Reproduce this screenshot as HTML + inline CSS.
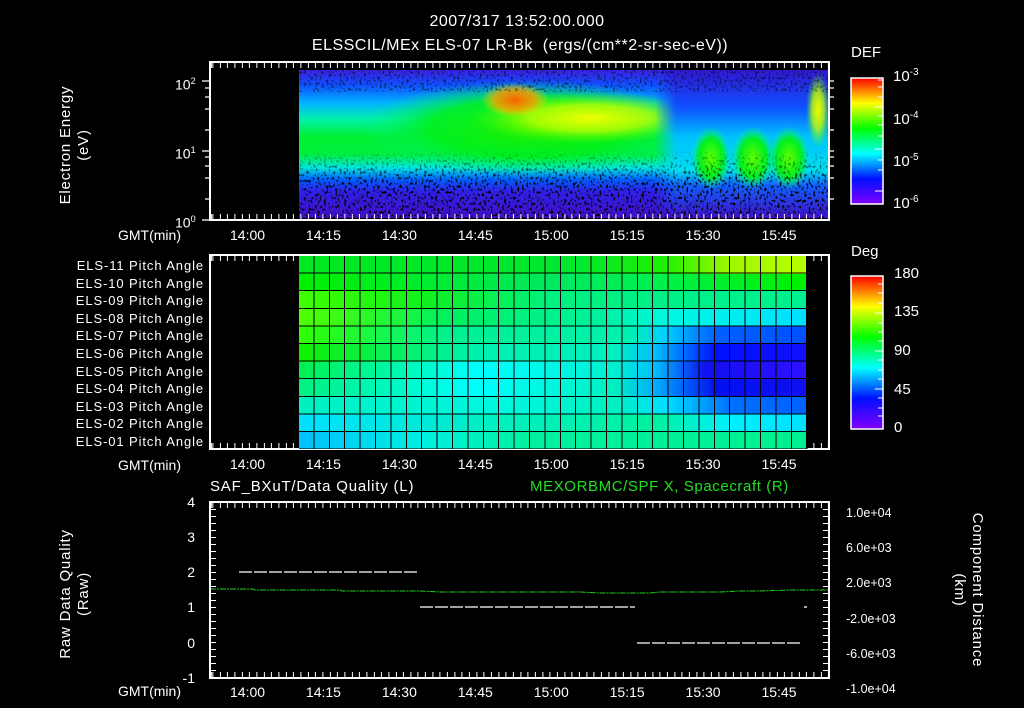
<!DOCTYPE html>
<html><head><meta charset="utf-8"><style>
body{margin:0;background:#000;width:1024px;height:708px;overflow:hidden;position:relative;font-family:"Liberation Sans",sans-serif;color:#fff}
.a{position:absolute;white-space:nowrap}
.t{font-size:14px;line-height:14px}
.box{position:absolute;border:2px solid #fff;box-sizing:border-box}
.row{position:absolute;left:299px;width:508px;height:17.6px}
</style></head><body>

<div class="a t" style="left:0;width:1034px;text-align:center;top:15px;font-size:16px;letter-spacing:0.5px">2007/317 13:52:00.000</div>
<div class="a t" style="left:0;width:1040px;text-align:center;top:39px;font-size:16px;letter-spacing:0.5px">ELSSCIL/MEx ELS-07 LR-Bk &nbsp;(ergs/(cm**2-sr-sec-eV))</div>

<svg class="a" style="left:0;top:0" width="1024" height="708" xmlns="http://www.w3.org/2000/svg">
<defs>
<linearGradient id="base" x1="0" y1="0" x2="0" y2="1">
<stop offset="0" stop-color="#3a20e0"/><stop offset="0.1" stop-color="#1050ff"/><stop offset="0.22" stop-color="#00b0ff"/><stop offset="0.33" stop-color="#00f0b0"/><stop offset="0.45" stop-color="#00f030"/><stop offset="0.57" stop-color="#00f040"/><stop offset="0.66" stop-color="#00e8e0"/><stop offset="0.74" stop-color="#0060ff"/><stop offset="0.82" stop-color="#3020e8"/><stop offset="1" stop-color="#4010c8"/>
</linearGradient>
<linearGradient id="right" x1="0" y1="0" x2="0" y2="1">
<stop offset="0" stop-color="#3018d0"/><stop offset="0.25" stop-color="#1050ff"/><stop offset="0.45" stop-color="#00c0ff"/><stop offset="0.68" stop-color="#00e0f0"/><stop offset="0.78" stop-color="#1060ff"/><stop offset="1" stop-color="#4010c8"/>
</linearGradient>
<linearGradient id="rfade" x1="0" y1="0" x2="1" y2="0"><stop offset="0" stop-color="#fff" stop-opacity="0"/><stop offset="0.12" stop-color="#fff"/><stop offset="1" stop-color="#fff"/></linearGradient>
<mask id="mr"><rect x="655" y="70" width="173" height="148" fill="url(#rfade)"/></mask>
<radialGradient id="yel"><stop offset="0" stop-color="#f0ff00"/><stop offset="0.5" stop-color="#c0ff00" stop-opacity="0.8"/><stop offset="1" stop-color="#40ff00" stop-opacity="0"/></radialGradient>
<radialGradient id="org"><stop offset="0" stop-color="#ff6000"/><stop offset="0.6" stop-color="#ffa000" stop-opacity="0.8"/><stop offset="1" stop-color="#ffe000" stop-opacity="0"/></radialGradient>
<radialGradient id="grn"><stop offset="0" stop-color="#60ff00"/><stop offset="0.6" stop-color="#00f020"/><stop offset="1" stop-color="#00f0a0" stop-opacity="0"/></radialGradient>
<radialGradient id="gbig"><stop offset="0" stop-color="#20f000"/><stop offset="0.6" stop-color="#00f020" stop-opacity="0.9"/><stop offset="1" stop-color="#00f080" stop-opacity="0"/></radialGradient>
<linearGradient id="cb" x1="0" y1="1" x2="0" y2="0">
<stop offset="0" stop-color="#8000ff"/><stop offset="0.2" stop-color="#0010ff"/><stop offset="0.4" stop-color="#00ffff"/><stop offset="0.6" stop-color="#00ff00"/><stop offset="0.8" stop-color="#ffff00"/><stop offset="1" stop-color="#ff0000"/>
</linearGradient>
<filter id="nz" x="0" y="0" width="100%" height="100%">
<feTurbulence type="fractalNoise" baseFrequency="0.45 0.35" numOctaves="1" seed="3"/>
<feColorMatrix type="matrix" values="0 0 0 0 0  0 0 0 0 0  0 0 0 0 0  6 0 0 0 -3.2"/>
</filter>
<linearGradient id="fade" x1="0" y1="0" x2="0" y2="1"><stop offset="0" stop-color="#fff" stop-opacity="0"/><stop offset="0.5" stop-color="#fff"/><stop offset="1" stop-color="#fff"/></linearGradient>
<mask id="m1"><rect x="299" y="150" width="529" height="68" fill="url(#fade)"/><rect x="299" y="70" width="529" height="22" fill="#fff" opacity="0.5"/></mask>
</defs>

<rect x="299" y="70" width="529" height="148" fill="url(#base)"/>
<ellipse cx="530" cy="128" rx="170" ry="48" fill="url(#gbig)"/>
<ellipse cx="590" cy="118" rx="120" ry="26" fill="url(#yel)"/>
<ellipse cx="515" cy="100" rx="34" ry="17" fill="url(#org)"/>
<rect x="655" y="70" width="173" height="148" fill="url(#right)" mask="url(#mr)"/>
<ellipse cx="711" cy="158" rx="20" ry="32" fill="url(#grn)"/>
<ellipse cx="753" cy="158" rx="22" ry="32" fill="url(#grn)"/>
<ellipse cx="789" cy="158" rx="21" ry="32" fill="url(#grn)"/>
<ellipse cx="818" cy="110" rx="12" ry="38" fill="url(#yel)"/>
<rect x="299" y="70" width="529" height="148" filter="url(#nz)" mask="url(#m1)"/>

<rect x="851" y="78" width="32" height="126" fill="url(#cb)" stroke="#fff" stroke-width="1.5"/>
<rect x="851" y="276" width="32" height="153" fill="url(#cb)" stroke="#fff" stroke-width="1.5"/>
<g stroke="#fff" stroke-width="1">
<path d="M883 80h-5M883 87h-5M883 97h-5M883 107h-8M883 116h-5M883 125h-5M883 136h-5M883 149h-8M883 160h-5M883 170h-5M883 191h-8"/>
<path d="M883 284h-5M883 293h-5M883 303h-5M883 313h-8M883 323h-5M883 332h-5M883 341h-5M883 351h-8M883 360h-5M883 370h-5M883 379h-5M883 389h-8M883 398h-5M883 408h-5M883 416h-5"/>
</g>

<g stroke="#fff" stroke-width="1.3">
<path d="M210 81h-8M210 88h-5M210 97h-5M210 109h-5M210 130h-5M210 151h-8M210 157h-5M210 166h-5M210 178h-5M210 199h-5M210 220h-8"/>
<path d="M829 81h5M829 88h5M829 97h5M829 109h5M829 130h5M829 151h5M829 157h5M829 166h5M829 178h5M829 199h5"/>
</g>

<g stroke="#fff" stroke-width="1.3" stroke-dasharray="13 2">
<path d="M239 572H418"/><path d="M420 607H635"/><path d="M637 643H802"/><path d="M804 607h3"/>
</g>
<path d="M210 589H252L255 590H340L342 591H420L440 592H580L600 593H650L660 592H720L740 591H760L790 590H829" stroke="#20d020" stroke-width="1" stroke-dasharray="6 1 2 1" fill="none"/>
</svg>

<div class="box" style="left:209px;top:61px;width:621px;height:160px"></div>
<div class="box" style="left:209px;top:254px;width:621px;height:196px"></div>
<div class="box" style="left:209px;top:501px;width:621px;height:178px"></div>

<div class="a" style="left:211px;top:63px;width:617px;height:5px;background:repeating-linear-gradient(90deg,#fff 0 1px,transparent 1px 7.33px);background-position:1.4px 0"></div>
<div class="a" style="left:211px;top:214px;width:617px;height:5px;background:repeating-linear-gradient(90deg,#fff 0 1px,transparent 1px 7.33px);background-position:1.4px 0"></div>
<div class="a" style="left:211px;top:256px;width:617px;height:5px;background:repeating-linear-gradient(90deg,#fff 0 1px,transparent 1px 7.33px);background-position:1.4px 0"></div>
<div class="a" style="left:211px;top:443px;width:617px;height:5px;background:repeating-linear-gradient(90deg,#fff 0 1px,transparent 1px 7.33px);background-position:1.4px 0"></div>
<div class="a" style="left:211px;top:503px;width:617px;height:5px;background:repeating-linear-gradient(90deg,#fff 0 1px,transparent 1px 7.33px);background-position:1.4px 0"></div>
<div class="a" style="left:211px;top:672px;width:617px;height:5px;background:repeating-linear-gradient(90deg,#fff 0 1px,transparent 1px 7.33px);background-position:1.4px 0"></div>
<div class="a" style="left:211px;top:503px;width:5px;height:174px;background:repeating-linear-gradient(180deg,transparent 0 6px,#fff 6px 7px);"></div>
<div class="a" style="left:823px;top:503px;width:5px;height:174px;background:repeating-linear-gradient(180deg,transparent 0 6px,#fff 6px 7px);"></div>

<div class="row" style="top:256px;background:linear-gradient(90deg,#00e820,#00e830 55%,#20f000 72%,#a0f800 85%,#b8ff00)"></div>
<div class="row" style="top:273.6px;background:linear-gradient(90deg,#00f000,#00e860 50%,#00f050 70%,#00f000)"></div>
<div class="row" style="top:291.2px;background:linear-gradient(90deg,#40ff00,#10f020 25%,#00f080 50%,#00f090)"></div>
<div class="row" style="top:308.8px;background:linear-gradient(90deg,#50ff00,#00f060 30%,#00f0a0 60%,#00f8e0 72%,#00e0ff)"></div>
<div class="row" style="top:326.4px;background:linear-gradient(90deg,#30ff00,#00f090 30%,#00f0b0 65%,#00d0ff 72%,#0060ff 82%,#0050ff)"></div>
<div class="row" style="top:344px;background:linear-gradient(90deg,#10f000,#00f0b0 35%,#00f0c0 62%,#00c0ff 70%,#0010ff 82%,#1010ff)"></div>
<div class="row" style="top:361.6px;background:linear-gradient(90deg,#00f050,#00ffff 35%,#00f0d0 62%,#00c0ff 70%,#1010f0 80%,#3010ff)"></div>
<div class="row" style="top:379.2px;background:linear-gradient(90deg,#00f080,#00ffff 35%,#00f0c0 62%,#00b0ff 70%,#0010f0 82%,#1010f0)"></div>
<div class="row" style="top:396.8px;background:linear-gradient(90deg,#00f0c0,#00f8e0 40%,#00f0c0 62%,#00e0ff 72%,#0070ff 85%,#0060ff)"></div>
<div class="row" style="top:414.4px;background:linear-gradient(90deg,#00e0ff,#00f0c0 40%,#00f0a0 70%,#00f0ff 85%,#00e0ff)"></div>
<div class="row" style="top:432px;height:17px;background:linear-gradient(90deg,#00c0ff,#00f0e0 25%,#00f0a0 45%,#00f090)"></div>
<div class="a" style="left:299px;top:256px;width:509px;height:193px;background:repeating-linear-gradient(90deg,transparent 0 14.4px,#000 14.4px 15.4px),repeating-linear-gradient(180deg,transparent 0 16.6px,#000 16.6px 17.6px)"></div>

<div class="a t" style="left:0;top:145px;width:0;height:0"><div style="transform:rotate(-90deg);transform-origin:0 0;position:absolute;left:57px;top:66px;width:132px;text-align:center;line-height:18px;font-size:15px;letter-spacing:0.8px">Electron Energy<br>(eV)</div></div>
<div class="a t" style="left:175px;top:74px">10<sup style="font-size:9px">2</sup></div>
<div class="a t" style="left:175px;top:143px">10<sup style="font-size:9px">1</sup></div>
<div class="a t" style="left:175px;top:212px">10<sup style="font-size:9px">0</sup></div>

<div class="a t" style="left:118px;top:228px">GMT(min)</div>
<div class="a t" style="left:118px;top:458px">GMT(min)</div>
<div class="a t" style="left:118px;top:684px">GMT(min)</div>

<div class="a t" style="left:230px;top:228px;word-spacing:37px">14:00 14:15 14:30 14:45 15:00 15:15 15:30 15:45</div>
<div class="a t" style="left:230px;top:457px;word-spacing:37px">14:00 14:15 14:30 14:45 15:00 15:15 15:30 15:45</div>
<div class="a t" style="left:230px;top:685px;word-spacing:37px">14:00 14:15 14:30 14:45 15:00 15:15 15:30 15:45</div>

<div class="a t" style="left:851px;top:46px;font-size:15px">DEF</div>
<div class="a t" style="left:893px;top:66px;font-size:15px">10<sup style="font-size:10px">-3</sup></div>
<div class="a t" style="left:893px;top:109px;font-size:15px">10<sup style="font-size:10px">-4</sup></div>
<div class="a t" style="left:893px;top:151px;font-size:15px">10<sup style="font-size:10px">-5</sup></div>
<div class="a t" style="left:893px;top:193px;font-size:15px">10<sup style="font-size:10px">-6</sup></div>
<div class="a t" style="left:851px;top:245px;font-size:15px">Deg</div>
<div class="a t" style="left:894px;top:267px;font-size:15px">180</div>
<div class="a t" style="left:894px;top:305px;font-size:15px">135</div>
<div class="a t" style="left:894px;top:344px;font-size:15px">90</div>
<div class="a t" style="left:894px;top:383px;font-size:15px">45</div>
<div class="a t" style="left:894px;top:421px;font-size:15px">0</div>

<div class="a" style="left:40px;top:257px;width:164px;text-align:right;font-size:13px;letter-spacing:0.9px;line-height:17.6px">ELS-11 Pitch Angle<br>ELS-10 Pitch Angle<br>ELS-09 Pitch Angle<br>ELS-08 Pitch Angle<br>ELS-07 Pitch Angle<br>ELS-06 Pitch Angle<br>ELS-05 Pitch Angle<br>ELS-04 Pitch Angle<br>ELS-03 Pitch Angle<br>ELS-02 Pitch Angle<br>ELS-01 Pitch Angle</div>

<div class="a t" style="left:210px;top:480px;font-size:15px;letter-spacing:0.8px">SAF_BXuT/Data Quality (L)</div>
<div class="a t" style="left:530px;top:480px;font-size:15px;letter-spacing:0.6px;color:#20e020">MEXORBMC/SPF X, Spacecraft (R)</div>
<div class="a t" style="left:170px;top:495px;width:25px;text-align:right">4</div>
<div class="a t" style="left:170px;top:530px;width:25px;text-align:right">3</div>
<div class="a t" style="left:170px;top:565px;width:25px;text-align:right">2</div>
<div class="a t" style="left:170px;top:600px;width:25px;text-align:right">1</div>
<div class="a t" style="left:170px;top:636px;width:25px;text-align:right">0</div>
<div class="a t" style="left:170px;top:671px;width:25px;text-align:right">-1</div>
<div class="a" style="left:846px;top:496px;font-size:12.5px;line-height:35.2px">1.0e+04<br>6.0e+03<br>2.0e+03<br>-2.0e+03<br>-6.0e+03<br>-1.0e+04</div>
<div class="a t" style="left:0;top:0;width:0;height:0"><div style="transform:rotate(-90deg);transform-origin:0 0;position:absolute;left:57px;top:674px;width:160px;text-align:center;line-height:18px;font-size:15px;letter-spacing:0.8px">Raw Data Quality<br>(Raw)</div></div>
<div class="a t" style="left:0;top:0;width:0;height:0"><div style="transform:rotate(90deg);transform-origin:0 0;position:absolute;left:986px;top:501px;width:178px;text-align:center;line-height:18px;font-size:15px;letter-spacing:0.8px">Component Distance<br>(km)</div></div>
</body></html>
